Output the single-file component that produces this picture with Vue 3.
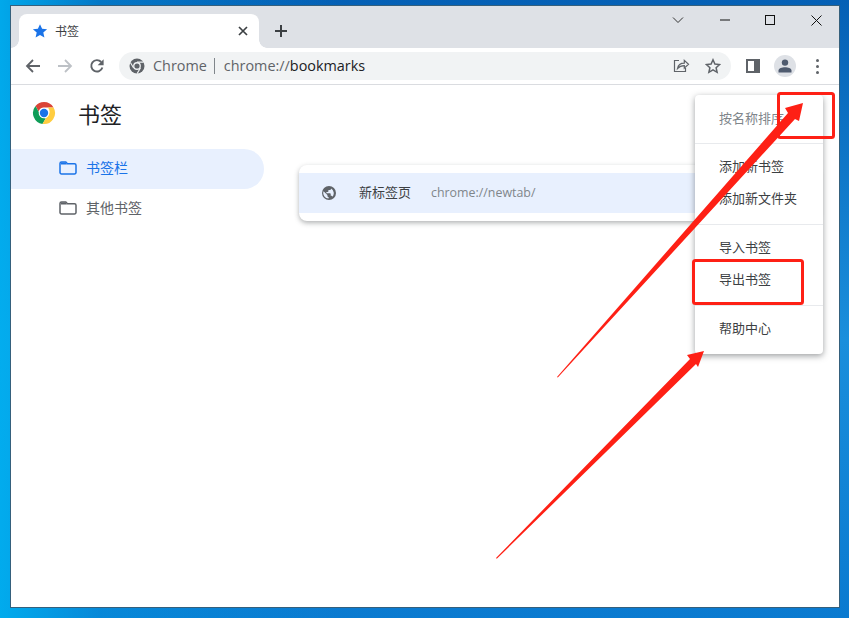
<script setup>
const menuGroups = [
  [{ label: '按名称排序', muted: true }],
  [{ label: '添加新书签' }, { label: '添加新文件夹' }],
  [{ label: '导入书签' }, { label: '导出书签' }],
  [{ label: '帮助中心' }],
]
</script>

<template>
  <div class="desktop">
    <div class="window">
      <div class="tabstrip">
        <div class="tab">
          <svg class="tab-star" width="16" height="16" viewBox="0 0 16 16"><path fill="#1a73e8" d="M8 1.200l2.100 4.600 5 .5-3.800 3.300 1.100 4.900L8 12l-4.400 2.500 1.100-4.900L.9 6.300l5-.5z"/></svg>
          <span class="tab-title">书签</span>
          <svg class="tab-close" width="10" height="10" viewBox="0 0 10 10"><path d="M1 1l8 8M9 1l-8 8" stroke="#3c4043" stroke-width="1.700" fill="none"/></svg>
        </div>
        <svg class="new-tab" width="14" height="14" viewBox="0 0 14 14"><path d="M7 1v12M1 7h12" stroke="#3c4043" stroke-width="2" fill="none"/></svg>
        <div class="caption">
          <svg width="12" height="8" viewBox="0 0 12 8"><path d="M1 1.500l5 5 5-5" stroke="#333" stroke-width="1" fill="none"/></svg>
          <svg width="10" height="10" viewBox="0 0 10 10"><path d="M0 5h10" stroke="#111" stroke-width="1"/></svg>
          <svg width="10" height="10" viewBox="0 0 10 10"><rect x=".5" y=".5" width="9" height="9" stroke="#111" fill="none"/></svg>
          <svg width="11" height="11" viewBox="0 0 11 11"><path d="M.5.5l10 10M10.500.5l-10 10" stroke="#111" stroke-width="1" fill="none"/></svg>
        </div>
      </div>

      <div class="toolbar">
        <svg class="nav" width="16" height="16" viewBox="0 0 16 16"><path d="M15 8H2M8 2L2 8l6 6" stroke="#5f6368" stroke-width="1.800" fill="none"/></svg>
        <svg class="nav" width="16" height="16" viewBox="0 0 16 16"><path d="M1 8h13M8 2l6 6-6 6" stroke="#bdc1c6" stroke-width="1.800" fill="none"/></svg>
        <svg class="nav" width="16" height="16" viewBox="0 0 16 16"><path d="M13.400 9.500a5.700 5.700 0 1 1-1.200-5.500" stroke="#5f6368" stroke-width="1.900" fill="none"/><path d="M14.600 1.200v6h-6z" fill="#5f6368"/></svg>
        <div class="omnibox">
          <svg width="16" height="16" viewBox="0 0 16 16">
            <circle cx="8" cy="8" r="7.500" fill="#5f6368"/>
            <circle cx="8" cy="8" r="3.900" fill="#f1f3f4"/>
            <circle cx="8" cy="8" r="2.600" fill="#5f6368"/>
            <path d="M8 4.100h6.600M4.600 10l-3.200-5.600M11.400 10l-3.300 5.600" stroke="#f1f3f4" stroke-width="1.100" fill="none"/>
          </svg>
          <span class="omni-site">Chrome</span>
          <span class="omni-sep"></span>
          <span class="omni-url"><span class="omni-scheme">chrome://</span>bookmarks</span>
          <svg class="omni-share" width="18" height="18" viewBox="0 0 18 18"><path d="M7 3.500H2.500v11h11V11" stroke="#5f6368" stroke-width="1.200" fill="none"/><path d="M5.500 11.500c.6-3.400 3.200-5.400 6.800-5.400V3.400l4.200 3.900-4.200 3.900V8.600c-2.800 0-5 .8-6.800 2.900z" stroke="#5f6368" stroke-width="1.200" fill="none"/></svg>
          <svg class="omni-star" width="16" height="16" viewBox="0 0 16 16"><path d="M8 1.800l1.900 4.300 4.700.5-3.500 3.100 1 4.600L8 11.900l-4.100 2.400 1-4.600L1.400 6.600l4.700-.5z" stroke="#5f6368" stroke-width="1.500" fill="none"/></svg>
        </div>
        <svg class="panel" width="14" height="14" viewBox="0 0 14 14"><path fill="#5f6368" fill-rule="evenodd" d="M0 0h14v14H0zM2 2v10h6V2z"/></svg>
        <div class="avatar">
          <svg width="14" height="14" viewBox="0 0 14 14"><circle cx="7" cy="3.600" r="3.200" fill="#4f5b6f"/><path fill="#4f5b6f" d="M.5 13.500v-2c0-2 3.500-3.200 6.500-3.200s6.500 1.200 6.500 3.200v2z"/></svg>
        </div>
        <div class="kebab"><i></i><i></i><i></i></div>
      </div>

      <div class="page">
        <aside class="sidebar">
          <div class="brand">
            <svg width="24" height="24" viewBox="0 0 24 24">
              <path fill="#db4437" d="M12 1a11 11 0 0 1 9.530 5.500H12a5.500 5.500 0 0 0-5.300 4L3.500 5A11 11 0 0 1 12 1z"/>
              <path fill="#0f9d58" d="M3.500 5l4.800 8.800a5.500 5.500 0 0 0 5.500 3.500L10.500 22.900A11 11 0 0 1 3.500 5z"/>
              <path fill="#ffcd40" d="M21.530 6.500A11 11 0 0 1 10.500 22.900l4.600-7.800a5.500 5.500 0 0 0 .7-8.600z"/>
              <circle cx="12" cy="12" r="5.300" fill="#fff"/>
              <circle cx="12" cy="12" r="4.200" fill="#1a73e8"/>
            </svg>
            <h1>书签</h1>
          </div>
          <div class="folder active">
            <svg width="18" height="16" viewBox="0 0 18 16"><path d="M2.500 2h4.300l1.700 1.700h7A1.500 1.500 0 0 1 17 5.200v7.300a1.500 1.500 0 0 1-1.500 1.500h-13A1.500 1.500 0 0 1 1 12.500v-9A1.500 1.500 0 0 1 2.500 2z" fill="none" stroke="#1a73e8" stroke-width="1.500"/><path d="M2 2.500h4.500L8 4.500H2z" fill="#1a73e8"/></svg>
            <span>书签栏</span>
          </div>
          <div class="folder">
            <svg width="18" height="16" viewBox="0 0 18 16"><path d="M2.500 2h4.300l1.700 1.700h7A1.500 1.500 0 0 1 17 5.200v7.300a1.500 1.500 0 0 1-1.500 1.500h-13A1.500 1.500 0 0 1 1 12.500v-9A1.500 1.500 0 0 1 2.500 2z" fill="none" stroke="#5f6368" stroke-width="1.500"/><path d="M2 2.500h4.500L8 4.500H2z" fill="#5f6368"/></svg>
            <span>其他书签</span>
          </div>
        </aside>

        <main class="content">
          <div class="card">
            <div class="row">
              <svg width="14" height="14" viewBox="0 0 14 14">
                <circle cx="7" cy="7" r="7" fill="#5f6368"/>
                <path fill="#e8f0fe" d="M1.500 5.200l3.900 3.700v.9c0 .7.600 1.300 1.200 1.300v1.500A5.700 5.700 0 0 1 1.500 5.200zM10.600 10.700c-.2-.5-.7-.9-1.200-.9h-.7V8c0-.4-.3-.7-.7-.7H4.400V6h1.300c.4 0 .7-.3.7-.7V4h1.300c.7 0 1.300-.6 1.300-1.300v-.3a5.700 5.700 0 0 1 1.600 8.300z"/>
              </svg>
              <span class="row-title">新标签页</span>
              <span class="row-url">chrome://newtab/</span>
            </div>
          </div>
        </main>

        <div class="menu">
          <div v-for="(group, i) in menuGroups" :key="i" class="menu-group">
            <div v-for="item in group" :key="item.label" class="menu-item" :class="{ muted: item.muted }">{{ item.label }}</div>
          </div>
        </div>
      </div>
    </div>

    <svg class="marks" width="849" height="618" viewBox="0 0 849 618">
      <rect x="778.500" y="93.500" width="55" height="44" rx="2" fill="none" stroke="#fe2015" stroke-width="3"/>
      <rect x="693.500" y="260.500" width="109" height="43" rx="2" fill="none" stroke="#fe2015" stroke-width="3"/>
      <path fill="#fe2015" d="M557 377L788 113L785 108L803 103L799 121L795 119L557.800 377.600z"/>
      <path fill="#fe2015" d="M496 558L690 359L687 355L704 351L698 367L696 364L496.800 558.800z"/>
    </svg>
  </div>
</template>

<style>
html, body { margin: 0; padding: 0; }
</style>

<style scoped>
.desktop {
  position: relative;
  width: 849px;
  height: 618px;
  overflow: hidden;
  box-sizing: border-box;
  padding: 5px 9px 10px 10px;
  background:
    linear-gradient(90deg, rgba(0, 176, 240, .9) 0, rgba(0, 160, 230, .35) 12%, rgba(0, 120, 210, 0) 40%),
    linear-gradient(180deg, #0560b5 0, #1a8fdc 55%, #0a7ad0 100%);
  font-family: "Open Sans", "Noto Sans CJK SC", sans-serif;
}
.window {
  width: 830px;
  height: 603px;
  box-sizing: border-box;
  border: 1px solid #35607c;
  background: #fff;
  display: flex;
  flex-direction: column;
}
.tabstrip {
  flex: 0 0 42px;
  background: #dee1e6;
  display: flex;
  align-items: flex-end;
  padding-left: 8px;
  position: relative;
}
.tab {
  position: relative;
  width: 240px;
  height: 34px;
  box-sizing: border-box;
  background: #fff;
  border-radius: 8px 8px 0 0;
  display: flex;
  align-items: center;
  padding: 0 11px 0 13px;
}
.tab::before,
.tab::after {
  content: "";
  position: absolute;
  bottom: 0;
  width: 8px;
  height: 8px;
}
.tab::before {
  left: -8px;
  background: radial-gradient(circle at 0 0, #dee1e6 7.500px, #fff 8px);
}
.tab::after {
  right: -8px;
  background: radial-gradient(circle at 100% 0, #dee1e6 7.500px, #fff 8px);
}
.tab-title {
  margin-left: 7px;
  font-size: 12px;
  color: #3c4043;
  flex: 1;
}
.new-tab { margin: 0 0 10px 15px; }
.caption {
  position: absolute;
  right: 0;
  top: 0;
  height: 28px;
  display: flex;
  align-items: center;
}
.caption svg:nth-child(1) { margin-right: 36px; }
.caption svg:nth-child(2) { margin-right: 35px; }
.caption svg:nth-child(3) { margin-right: 36px; }
.caption svg:nth-child(4) { margin-right: 17px; }
.toolbar {
  flex: 0 0 36px;
  background: #fff;
  border-bottom: 1px solid #dadce0;
  box-sizing: content-box;
  display: flex;
  align-items: center;
  padding-left: 14px;
}
.nav { margin-right: 16px; }
.nav:nth-child(3) { margin-right: 14px; }
.omnibox {
  width: 612px;
  height: 28px;
  box-sizing: border-box;
  margin-right: 15px;
  background: #f1f3f4;
  border-radius: 14px;
  display: flex;
  align-items: center;
  padding: 0 10px;
  font-size: 14.400px;
  color: #5f6368;
}
.omni-site {
  margin-left: 8px;
  padding-bottom: 2px;
}
.omni-sep {
  width: 1px;
  height: 16px;
  background: #80868b;
  margin: 0 9px 0 7px;
}
.omni-url {
  color: #202124;
  flex: 1;
  padding-bottom: 2px;
}
.omni-scheme { color: #5f6368; }
.omni-share { margin-right: 15px; }
.panel { margin-right: 14px; }
.avatar {
  width: 22px;
  height: 22px;
  border-radius: 50%;
  background: #dee1e6;
  display: flex;
  align-items: center;
  justify-content: center;
  margin-right: 20px;
}
.kebab {
  display: flex;
  flex-direction: column;
  gap: 3px;
  width: 4px;
}
.kebab i {
  width: 3px;
  height: 3px;
  border-radius: 50%;
  background: #5f6368;
}
.page {
  flex: 1;
  display: flex;
  position: relative;
  background: #fff;
}
.sidebar { width: 253px; flex: none; }
.brand {
  height: 56px;
  margin-bottom: 8px;
  display: flex;
  align-items: center;
  padding-left: 21px;
}
.brand h1 {
  margin: 0 0 0 22px;
  font-size: 22px;
  font-weight: 400;
  color: #202124;
}
.folder {
  height: 40px;
  border-radius: 0 20px 20px 0;
  display: flex;
  align-items: center;
  padding-left: 48px;
  font-size: 14px;
  color: #5f6368;
}
.folder svg { margin-bottom: 2px; }
.folder span {
  margin-left: 9px;
  padding-bottom: 4px;
}
.folder.active {
  background: #e8f0fe;
  color: #1a73e8;
}
.content {
  flex: 1;
  padding: 80px 20px 0 35px;
}
.card {
  height: 56px;
  box-sizing: border-box;
  padding: 8px 0;
  border-radius: 8px;
  background: #fff;
  box-shadow: 0 2px 5px rgba(60, 64, 67, .4);
}
.row {
  height: 40px;
  background: #e8f0fe;
  display: flex;
  align-items: center;
  padding-left: 23px;
}
.row-title {
  margin-left: 23px;
  padding-bottom: 4px;
  font-size: 13px;
  color: #3c4043;
}
.row-url {
  margin-left: 20px;
  padding-bottom: 2px;
  font-size: 12.400px;
  color: #80868b;
}
.menu {
  position: absolute;
  left: 684px;
  top: 10px;
  width: 128px;
  height: 259px;
  box-sizing: border-box;
  background: #fff;
  border-radius: 4px;
  box-shadow: 0 2px 6px rgba(60, 64, 67, .5);
}
.menu-group {
  padding: 8px 0;
  border-bottom: 1px solid #e8eaed;
}
.menu-group:last-child { border-bottom: 0; }
.menu-group:first-child { height: 49px; box-sizing: border-box; padding-top: 9px; }
.menu-item {
  height: 32px;
  line-height: 28px;
  padding-left: 24px;
  font-size: 13px;
  color: #3c4043;
  white-space: nowrap;
}
.menu-item.muted { color: #80868b; }
.marks {
  position: absolute;
  left: 0;
  top: 0;
  pointer-events: none;
}
</style>
